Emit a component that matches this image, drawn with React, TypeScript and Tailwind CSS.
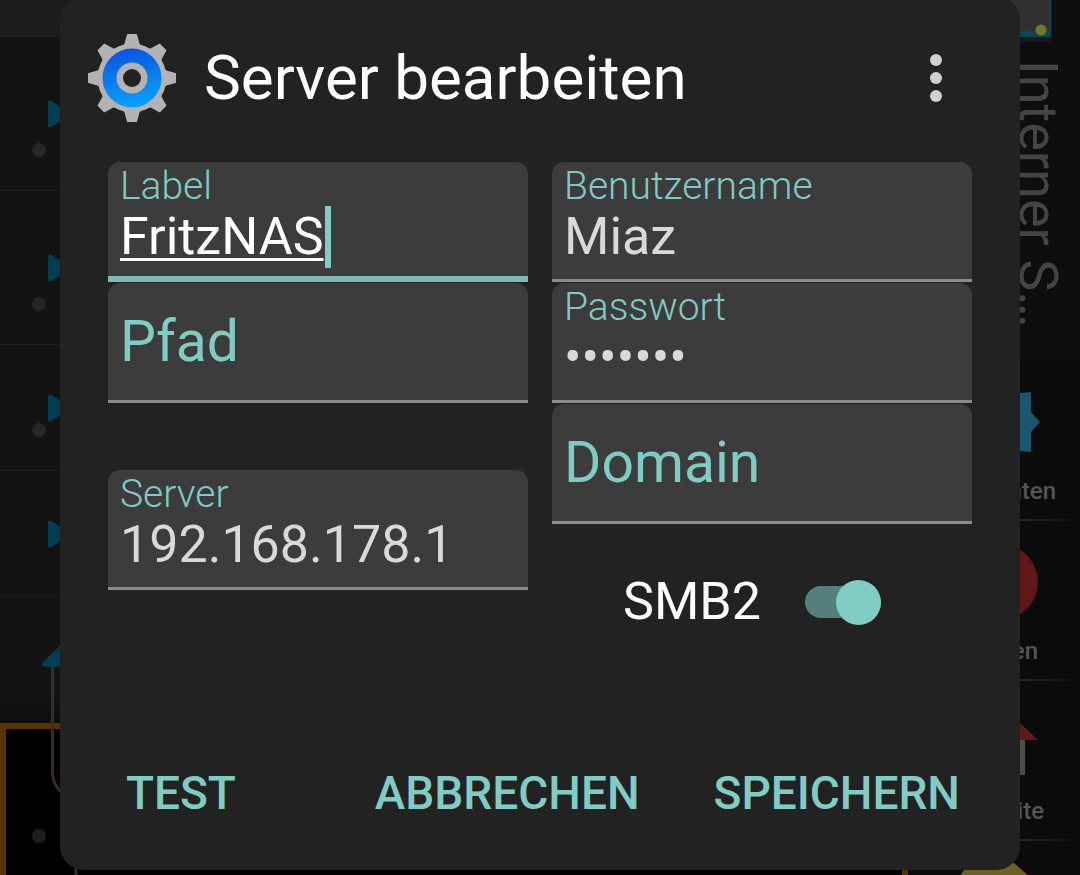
import { useState } from "react";
import type { ReactNode } from "react";

type FieldProps = {
  id: string;
  label: string;
  value?: string;
  type?: string;
  active?: boolean;
};

// Filled text field: small label on top, or a large one while it is empty
function Field({ id, label, value = "", type = "text", active = false }: FieldProps) {
  const [text, setText] = useState(value);
  const empty = text === "";
  const frame = active
    ? "border-b-6 border-[#7fb8b1]"
    : "border-b-3 border-[#8b8b8b]";

  return (
    <div
      className={`relative flex h-[120px] rounded-t-xl bg-[#3c3c3c] px-3 ${frame} ${
        empty ? "items-center gap-3" : "flex-col"
      }`}
    >
      <label
        htmlFor={id}
        className={
          empty
            ? "text-[57px] leading-[72px] text-[#80cbc4]"
            : "text-[39px] leading-[48px] font-light text-[#80cbc4]"
        }
      >
        {label}
      </label>
      <input
        id={id}
        type={type}
        value={text}
        onChange={(e) => setText(e.target.value)}
        className={`h-[54px] min-w-0 bg-transparent text-[52px] outline-none ${empty ? "flex-1" : "w-full"} ${
          active ? "text-white underline decoration-3 underline-offset-4" : "text-[#d9d9d9]"
        }`}
      />
      {active && <span className="absolute top-11 left-[217px] h-[62px] w-1.5 bg-[#80cbc4]" />}
    </div>
  );
}

function GearIcon() {
  const teeth = [0, 45, 90, 135, 180, 225, 270, 315];
  return (
    <svg viewBox="0 0 88 88" className="size-[88px] shrink-0" aria-hidden="true">
      <defs>
        <linearGradient id="gear-blue" x1="0" y1="0" x2="0.2" y2="1">
          <stop offset="0" stopColor="#0b4fdc" />
          <stop offset="1" stopColor="#0a9dfb" />
        </linearGradient>
      </defs>
      <g fill="#b3b3b3">
        {teeth.map((a) => (
          <path
            key={a}
            d="M39 0.500Q39.200 0 40 0H48Q48.800 0 49 0.500L51.500 9.500Q52 11 54 12V20H34V12Q36 11 36.500 9.500Z"
            transform={`rotate(${a} 44 44)`}
          />
        ))}
        <circle cx="44" cy="44" r="34.500" />
      </g>
      <circle cx="44" cy="44" r="29.500" fill="url(#gear-blue)" />
      <circle cx="44" cy="44" r="15.500" fill="#b3b3b3" />
      <circle cx="44" cy="44" r="9" fill="#222222" />
    </svg>
  );
}

function ListRow({ className, dot = true }: { className: string; dot?: boolean }) {
  return (
    <div className={`flex border-b border-[#1c1c1c] pl-8 ${className}`}>
      <div className="flex w-4 items-end pb-[33px]">
        {dot && <span className="size-3.5 shrink-0 rounded-full bg-[#262626]" />}
      </div>
      <svg viewBox="0 0 22 28" className="h-7 w-[22px] self-center" aria-hidden="true">
        <path d="M0 2Q0 0 3 0.500L20 12Q22 14 20 16L3 27.500Q0 28 0 26Z" fill="#003d53" />
      </svg>
    </div>
  );
}

function NavItem({ label, align, children }: { label: string; align: string; children: ReactNode }) {
  return (
    <a href="#" className="flex h-40 flex-col justify-between pt-[21px]">
      <svg viewBox="0 0 80 80" className="size-20 shrink-0 self-center" aria-hidden="true">
        {children}
      </svg>
      <span className={`text-right text-2xl leading-8 font-medium text-[#555555] ${align}`}>{label}</span>
      <span className="h-0.5 bg-linear-to-r from-[#2b2b2b] from-60% to-[#0b0b0b]" />
    </a>
  );
}

function Backdrop() {
  return (
    <div className="col-start-1 row-start-1 flex h-screen">
      <div className="mr-3 flex flex-1 flex-col bg-[#131313]">
        <div className="h-[37px] bg-[#1c1c1c]" />
        <ListRow className="h-[154px]" />
        <ListRow className="h-[154px]" />
        <ListRow className="h-[126px]" />
        <ListRow className="h-[126px]" dot={false} />
        <div className="relative h-[126px] bg-linear-to-b from-[#131313] from-80% to-[#0c0c0c]">
          {/* arrow and the line that leads down from it */}
          <svg viewBox="0 0 90 230" className="absolute top-12 left-0 h-[230px] w-[90px]" aria-hidden="true">
            <path d="M52.500 20V128Q53 140 62 148Q76 158 76 172V230" fill="none" stroke="#3d2c1c" strokeWidth="3" />
            <path d="M62 -1L43 17Q41 21 45 22H80Z" fill="#003d53" />
          </svg>
        </div>
        <div className="flex flex-1 items-end border-6 border-b-0 border-[#5a3200] bg-black pb-8 pl-[26px]">
          <span className="size-3.5 rounded-full bg-[#1e1e1e]" />
        </div>
      </div>

      <div className="flex w-40 flex-col overflow-hidden bg-[#0b0b0b]">
        <div className="flex h-[361px] shrink-0 flex-col items-end border-b border-[#070707] bg-[#0e0e0e]">
          <svg viewBox="0 0 60 42" className="mr-7 h-[42px] w-[60px] shrink-0" aria-hidden="true">
            <path d="M0 0H60V38Q60 42 56 42H0Z" fill="#121a1c" />
            <path d="M0 0H59V37H0Z" fill="#0b4652" />
            <path d="M0 0H57V31H0Z" fill="#303030" />
            <circle cx="49" cy="30" r="5.500" fill="#74742c" />
          </svg>
          <p className="mt-[18px] mr-3 text-[54px] leading-[60px] whitespace-nowrap text-[#444444] [writing-mode:vertical-rl]">
            Interner S…
          </p>
        </div>
        <nav className="flex flex-col">
          <NavItem label="nten" align="pr-6">
            <path d="M40 0L50 12L71 10V30L80 40L71 50V70L50 68L40 80L30 68L9 70V50L0 40L9 30V10L30 12Z" fill="#1d5470" />
          </NavItem>
          <NavItem label="en" align="pr-[42px]">
            <circle cx="40" cy="40" r="38" fill="#5f1815" />
          </NavItem>
          <NavItem label="ite" align="pr-9">
            <path d="M14 38H65V73H14Z" fill="#4d4d4d" />
            <path d="M40 2L78 38H2Z" fill="#5f1c15" />
          </NavItem>
          <NavItem label="" align="pr-6">
            <path d="M8 2L54 1L80 24L72 80H8L0 14Z" fill="#6f5f22" />
          </NavItem>
        </nav>
      </div>
    </div>
  );
}

export default function App() {
  const [smb2, setSmb2] = useState(true);

  return (
    <div className="grid h-screen overflow-hidden bg-[#0b0b0b] font-[Roboto,sans-serif]">
      <Backdrop />

      <form
        role="dialog"
        aria-labelledby="dialog-title"
        onSubmit={(e) => e.preventDefault()}
        className="z-10 col-start-1 row-start-1 mx-[60px] -mt-1 flex flex-col self-start rounded-3xl bg-[#222222] pb-[39px]"
      >
        <header className="flex items-center gap-7 px-7 pt-[38px]">
          <GearIcon />
          <h1 id="dialog-title" className="flex-1 text-[62px] leading-[72px] text-white">
            Server bearbeiten
          </h1>
          <button type="button" aria-label="Menü" className="mr-8 flex h-[72px] w-12 flex-col items-center justify-center gap-1.5">
            <span className="size-3 rounded-full bg-[#d0d0d0]" />
            <span className="size-3 rounded-full bg-[#d0d0d0]" />
            <span className="size-3 rounded-full bg-[#d0d0d0]" />
          </button>
        </header>

        <div className="mt-10 grid grid-cols-2 gap-6 px-12">
          <div className="flex flex-col gap-px">
            <Field id="label" label="Label" value="FritzNAS" active />
            <Field id="path" label="Pfad" />
            <div className="mt-[66px]">
              <Field id="server" label="Server" value="192.168.178.1" />
            </div>
          </div>
          <div className="flex flex-col gap-px">
            <Field id="user" label="Benutzername" value="Miaz" />
            <Field id="password" label="Passwort" value="geheim1" type="password" />
            <Field id="domain" label="Domain" />
            <div className="mt-11 flex items-center justify-center gap-11 pr-5">
              <label htmlFor="smb2" className="text-[52px] leading-[66px] text-white">
                SMB2
              </label>
              <input
                id="smb2"
                type="checkbox"
                role="switch"
                checked={smb2}
                onChange={(e) => setSmb2(e.target.checked)}
                className="flex h-8 w-[76px] appearance-none items-center rounded-full bg-[#54807b] before:size-[45px] before:rounded-full before:bg-[#80cbc4] checked:justify-end"
              />
            </div>
          </div>
        </div>

        <div className="mt-[120px] flex px-12 text-[46px] leading-[76px] font-medium text-[#80cbc4]">
          <button type="button" className="px-[18px]">
            TEST
          </button>
          <button type="button" className="mr-14 ml-auto px-[18px]">
            ABBRECHEN
          </button>
          <button type="submit" className="pr-3">
            SPEICHERN
          </button>
        </div>
      </form>
    </div>
  );
}
